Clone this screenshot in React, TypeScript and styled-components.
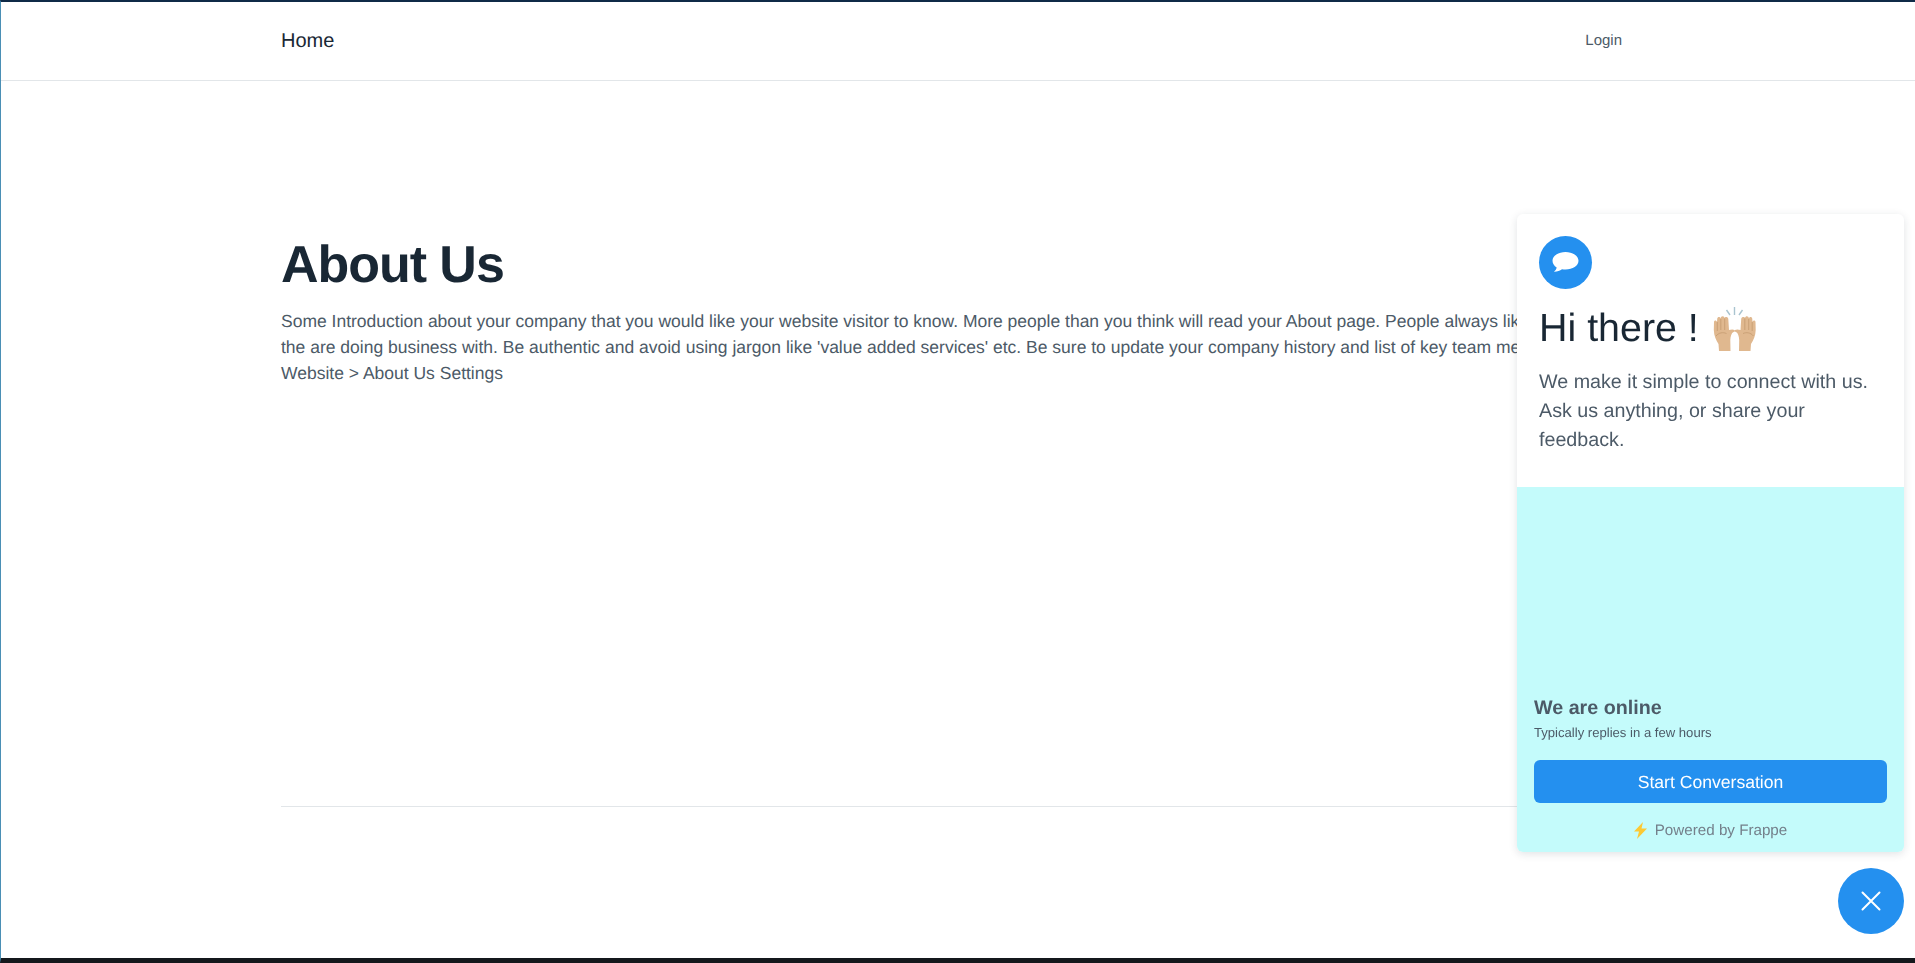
import React from 'react';
import styled, { createGlobalStyle } from 'styled-components';

const GlobalStyle = createGlobalStyle`
  html, body {
    margin: 0;
    padding: 0;
    height: 100%;
    background: #ffffff;
    overflow: hidden;
  }
  body {
    font-family: "Liberation Sans", Arial, sans-serif;
    color: #4c5a67;
    text-rendering: geometricPrecision;
  }
  * {
    box-sizing: border-box;
  }
`;

const Page = styled.div`
  display: flex;
  flex-direction: column;
  height: 963px;
  border-top: 2px solid #0f2a47;
  border-left: 1px solid #4a8fb5;
  border-bottom: 5px solid #14181c;
`;

const Navbar = styled.nav`
  display: flex;
  align-items: center;
  justify-content: space-between;
  height: 79px;
  padding: 1px 293px 0 280px;
  border-bottom: 1px solid #e2e6e9;
`;

const Brand = styled.a`
  font-size: 20px;
  color: #192734;
  text-decoration: none;
`;

const NavLink = styled.a`
  padding-bottom: 3px;
  font-size: 15px;
  color: #4c5a67;
  text-decoration: none;
`;

const Main = styled.main`
  flex: 1;
  display: flex;
  flex-direction: column;
  padding: 153px 268px 0 280px;
`;

const Title = styled.h1`
  margin: 0;
  font-size: 52px;
  line-height: 62px;
  font-weight: 700;
  letter-spacing: -0.02em;
  color: #192734;
`;

const Intro = styled.p`
  margin: 12px 0 0;
  font-size: 17.5px;
  line-height: 26px;
  color: #4c5a67;
`;

const FooterRule = styled.hr`
  margin: auto 0 151px;
  width: 100%;
  border: 0;
  border-top: 1px solid #e2e6e9;
`;

const Widget = styled.aside`
  position: fixed;
  top: 214px;
  right: 11px;
  display: flex;
  flex-direction: column;
  width: 387px;
  height: 638px;
  border-radius: 6px;
  overflow: hidden;
  background: #ffffff;
  box-shadow: 0 2px 8px rgba(25, 39, 52, 0.13);
`;

const Greeting = styled.header`
  display: flex;
  flex-direction: column;
  height: 273px;
  padding: 22px 22px 0;
`;

const BubbleBadge = styled.div`
  display: flex;
  align-items: center;
  justify-content: center;
  width: 53px;
  height: 53px;
  border-radius: 50%;
  background: #2490ef;
`;

const Heading = styled.h2`
  display: flex;
  align-items: center;
  gap: 13px;
  margin: 15px 0 0;
  font-size: 39.4px;
  line-height: 48px;
  font-weight: 400;
  color: #192734;
`;

const Lead = styled.p`
  margin: 16px 0 0;
  font-size: 19.7px;
  line-height: 29px;
  color: #4c5a67;
`;

const Status = styled.section`
  flex: 1;
  display: flex;
  flex-direction: column;
  justify-content: flex-end;
  padding: 0 17px;
  background: #c4fbfb;
`;

const StatusTitle = styled.div`
  font-size: 19.7px;
  line-height: 24px;
  font-weight: 700;
  color: #4c5a67;
`;

const StatusNote = styled.div`
  margin-top: 3px;
  font-size: 13.1px;
  line-height: 20px;
  color: #4c5a67;
`;

const StartButton = styled.button`
  width: 100%;
  height: 43px;
  margin-top: 17px;
  padding: 2px 0 0;
  border: 0;
  border-radius: 6px;
  background: #2490ef;
  color: #ffffff;
  font-family: inherit;
  font-size: 17.6px;
  text-rendering: geometricPrecision;
`;

const Powered = styled.div`
  display: flex;
  align-items: center;
  justify-content: center;
  gap: 8px;
  height: 49px;
  padding-top: 5px;
  font-size: 15.2px;
  color: #74808b;
`;

const CloseFab = styled.button`
  position: fixed;
  top: 868px;
  right: 11px;
  display: flex;
  align-items: center;
  justify-content: center;
  width: 66px;
  height: 66px;
  padding: 0;
  border: 0;
  border-radius: 50%;
  background: #2490ef;
`;

const BubbleIcon = () => (
  <svg width="27" height="23" viewBox="0 0 27 23" aria-hidden="true">
    <path
      d="M13.5 1C20.5 1 26.500 4.900 26.500 9.800c0 5-5.800 8.700-13 8.700-1.200 0-2.400-.1-3.500-.3-2 1.500-5 2.600-8 2.500 1.300-.9 2.300-2.200 2.700-4.100C2.200 14.900.5 12.500.5 9.800.5 4.900 6.500 1 13.500 1z"
      fill="#ffffff"
    />
  </svg>
);

const Hand = ({ flip }: { flip?: boolean }) => (
  <g transform={flip ? 'translate(49.5 0) scale(-1 1)' : undefined}>
    <path
      d="M9 49l-.5-7C6 38 4 34 3.800 28L4 20c.2-2 2.500-2 3 0l.2-3c.3-2.500 2.800-2.500 3.300-.5.5-3 3.500-3 4-.5.5-1.500 3.500-1.500 3.800 1L19 28c1.500-.5 4-1 5.500 0 1 1 0 2-1 2-2 1-3 4-3.200 8l.2 11z"
      fill="#e0b88f"
    />
    <path
      d="M7.300 20v9M10.800 17v11M14.700 16.500V28M6 34c3-3.500 7-4 10.500-2.500"
      fill="none"
      stroke="#c49a70"
      strokeWidth="0.8"
    />
  </g>
);

const RaisedHands = () => (
  <svg width="46" height="48" viewBox="2 2 46 48" aria-label="raising hands">
    <path
      d="M24.500 5v8M16.500 8l3.500 5M32.500 8l-3.500 5"
      fill="none"
      stroke="#a9c4d0"
      strokeWidth="1.400"
    />
    <Hand />
    <Hand flip />
  </svg>
);

const BoltIcon = () => (
  <svg width="13" height="17" viewBox="0 0 13 17" aria-hidden="true">
    <path d="M9 0 0 9.500h5L3 17 13 6.500H7.500z" fill="#fcc934" />
  </svg>
);

const CloseIcon = () => (
  <svg width="20" height="20" viewBox="0 0 20 20" aria-hidden="true">
    <path d="M1.500 1.500l17 17M18.500 1.500l-17 17" stroke="#ffffff" strokeWidth="2" strokeLinecap="round" />
  </svg>
);

const App: React.FC = () => (
  <>
    <GlobalStyle />
    <Page>
      <Navbar>
        <Brand href="#">Home</Brand>
        <NavLink href="#">Login</NavLink>
      </Navbar>
      <Main>
        <Title>About Us</Title>
        <Intro>
          Some Introduction about your company that you would like your website visitor to know.
          More people than you think will read your About page. People always like to know who the
          are doing business with. Be authentic and avoid using jargon like 'value added services'
          etc. Be sure to update your company history and list of key team members in Website &gt;
          About Us Settings
        </Intro>
        <FooterRule />
      </Main>
    </Page>
    <Widget>
      <Greeting>
        <BubbleBadge>
          <BubbleIcon />
        </BubbleBadge>
        <Heading>
          Hi there ! <RaisedHands />
        </Heading>
        <Lead>We make it simple to connect with us. Ask us anything, or share your feedback.</Lead>
      </Greeting>
      <Status>
        <StatusTitle>We are online</StatusTitle>
        <StatusNote>Typically replies in a few hours</StatusNote>
        <StartButton>Start Conversation</StartButton>
        <Powered>
          <BoltIcon /> Powered by Frappe
        </Powered>
      </Status>
    </Widget>
    <CloseFab aria-label="Close">
      <CloseIcon />
    </CloseFab>
  </>
);

export default App;
